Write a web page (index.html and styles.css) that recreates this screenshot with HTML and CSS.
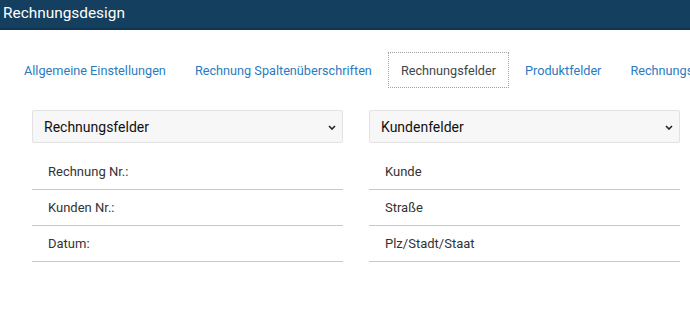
FILE: index.html
```html
<!DOCTYPE html>
<html lang="de">
<head>
  <meta charset="UTF-8"/>
  <title>Rechnungsdesign</title>
  <link rel="stylesheet" href="styles.css">
</head>
<body>
  <!-- HEADER -->
  <div class="page-header">Rechnungsdesign</div>

  <!-- TABS -->
  <ul class="tabs">
    <li class="tab">Allgemeine Einstellungen</li>
    <li class="tab">Rechnung Spaltenüberschriften</li>
    <li class="tab active">Rechnungsfelder</li>
    <li class="tab">Produktfelder</li>
    <li class="tab">Rechnungssumme</li>
  </ul>

  <!-- FIELD COLUMNS -->
  <div class="columns">
    <div class="column">
      <div class="select-box">
        <span>Rechnungsfelder</span>
        <svg class="chevron" width="8" height="5" viewBox="0 0 8 5"><path d="M1 1 L4 4 L7 1" fill="none" stroke="#222" stroke-width="1.6"/></svg>
      </div>
      <div class="field-row">Rechnung Nr.:</div>
      <div class="field-row">Kunden Nr.:</div>
      <div class="field-row">Datum:</div>
    </div>
    <div class="column">
      <div class="select-box">
        <span>Kundenfelder</span>
        <svg class="chevron" width="8" height="5" viewBox="0 0 8 5"><path d="M1 1 L4 4 L7 1" fill="none" stroke="#222" stroke-width="1.6"/></svg>
      </div>
      <div class="field-row">Kunde</div>
      <div class="field-row">Straße</div>
      <div class="field-row">Plz/Stadt/Staat</div>
    </div>
  </div>
</body>
</html>
```

FILE: styles.css
```css
/* base */
body {
  margin: 0;
  padding: 0;
  background: #fff;
  font-family: Roboto, "Liberation Sans", Arial, sans-serif;
  overflow: hidden;
}

.page-header {
  height: 28px;
  line-height: 27px;
  padding-left: 3px;
  background-color: #143f5e;
  border-bottom: 2px solid #0f3552;
  color: #fff;
  font-size: 15.4px;
}

/* tabs */
.tabs {
  display: flex;
  gap: 3px;
  list-style: none;
  margin: 22px 0 0 11px;
  padding: 0;
  white-space: nowrap;
}

.tab {
  height: 34px;
  line-height: 35px;
  padding: 0 12px;
  border: 1px solid transparent;
  color: #2a7bc0;
  font-size: 12.7px;
}

.tab.active {
  border: 1px dotted #a0a0a0;
  color: #444;
}

/* columns */
.columns {
  display: grid;
  grid-template-columns: 1fr 1fr;
  gap: 26px;
  margin: 22px 10px 0 32px;
}

.select-box {
  display: flex;
  align-items: center;
  justify-content: space-between;
  height: 31px;
  padding: 0 6px 0 11px;
  background-color: #f7f7f7;
  border: 1px solid #e2e2e2;
  border-radius: 2px;
  color: #111;
  font-size: 14px;
}

.chevron {
  margin-top: 1px;
}

.field-row {
  height: 35px;
  line-height: 35px;
  padding-left: 16px;
  border-bottom: 1px solid #c8c8c8;
  color: #333;
  font-size: 13px;
}

.select-box + .field-row {
  margin-top: 11px;
}
```
